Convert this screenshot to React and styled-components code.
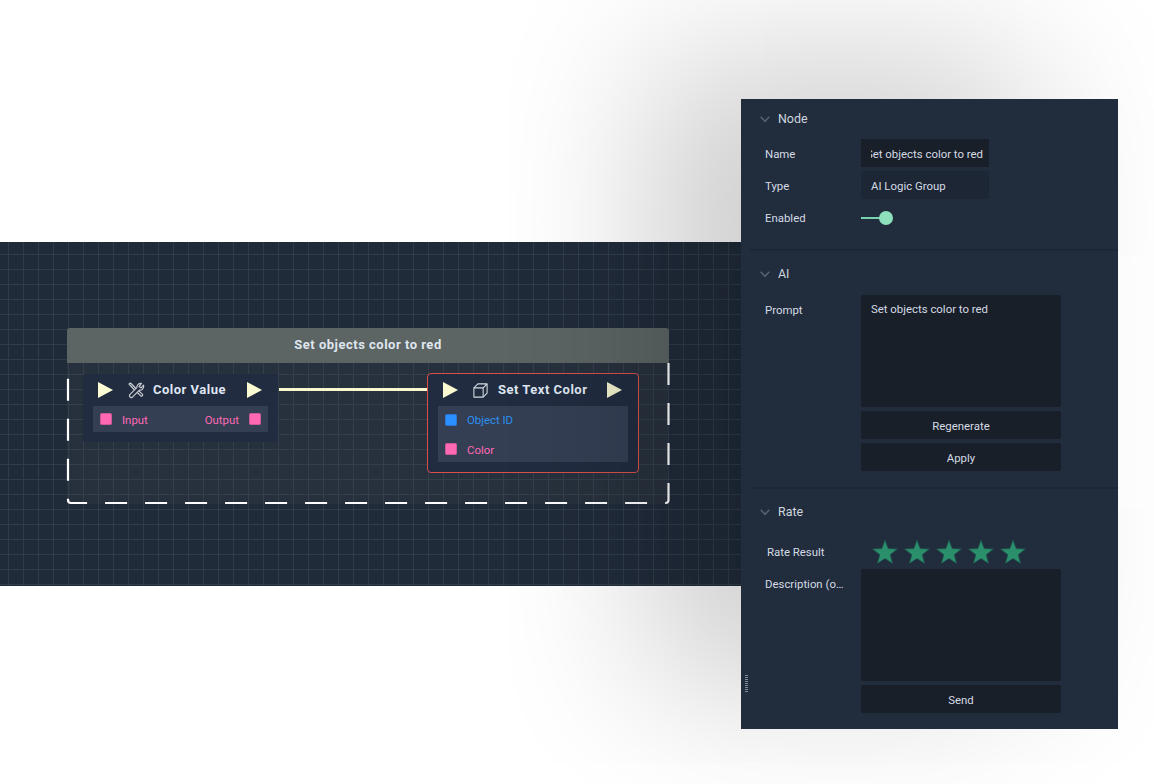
import React from "react";
import styled, { createGlobalStyle } from "styled-components";

const Global = createGlobalStyle`
  html, body { margin: 0; padding: 0; background: #fff; }
  body { font-family: Roboto, "Liberation Sans", sans-serif; overflow: hidden; }
`;

const Page = styled.div`
  position: relative;
  width: 1154px;
  height: 784px;
  padding-top: 242px;
  box-sizing: border-box;
  overflow: hidden;
`;

const Canvas = styled.div`
  position: relative;
  width: 760px;
  height: 344px;
  background-color: #202b3a;
  background-image:
    linear-gradient(to right, #303c4a 1px, transparent 1px),
    linear-gradient(to bottom, #303c4a 1px, transparent 1px);
  background-size: 15px 15px;
  background-position: 8px 12px;
`;

const Group = styled.div`
  position: absolute;
  left: 67px;
  top: 86px;
  width: 602px;
  height: 176px;
`;

const GroupHeader = styled.div`
  height: 35px;
  padding-bottom: 2px;
  box-sizing: border-box;
  background: #5c6464;
  border-radius: 3px 3px 0 0;
  color: #dfe6ee;
  font-size: 13px;
  font-weight: 700;
  letter-spacing: 0.5px;
  display: flex;
  align-items: center;
  justify-content: center;
`;

const GroupBody = styled.div`
  position: relative;
  height: 141px;
  background: rgba(70, 75, 80, 0.18);
`;

const GroupOutline = styled.svg`
  position: absolute;
  left: 0;
  top: 0;
  overflow: visible;
`;

const Wire = styled.div`
  position: absolute;
  left: 279px;
  top: 145.5px;
  width: 149px;
  height: 3px;
  background: #fbf8cf;
`;

const Node = styled.div`
  position: absolute;
  left: ${(p) => p.$x}px;
  top: ${(p) => p.$y}px;
  width: ${(p) => p.$w}px;
  height: ${(p) => p.$h}px;
  box-sizing: border-box;
  background: #212c40;
  border: ${(p) => (p.$selected ? "1px solid #d9504a" : "none")};
  border-radius: ${(p) => (p.$selected ? "4px" : "2px")};
  padding: 0 10px;
`;

const NodeHead = styled.div`
  height: 32px;
  display: flex;
  align-items: center;
  padding: 0 ${(p) => p.$pad}px 0 5px;
`;

const Flow = styled.svg`
  flex: none;
  width: 15px;
  height: 16px;
  display: block;
`;

const NodeIcon = styled.svg`
  flex: none;
  width: ${(p) => p.$size}px;
  height: ${(p) => p.$size}px;
  margin-left: ${(p) => p.$left}px;
`;

const NodeTitle = styled.div`
  flex: 1;
  margin-left: ${(p) => p.$left}px;
  padding-bottom: 2px;
  color: #dfe6f2;
  font-size: 13px;
  font-weight: 700;
  letter-spacing: 0.5px;
  white-space: nowrap;
`;

const Pins = styled.div`
  background: #343f54;
  padding: ${(p) => p.$pad};
  display: flex;
  flex-direction: column;
  gap: ${(p) => p.$gap}px;
`;

const PinRow = styled.div`
  height: 12px;
  display: flex;
  align-items: center;
  justify-content: space-between;
  font-size: 11.4px;
  color: ${(p) => p.$color};
`;

const PinSide = styled.div`
  display: flex;
  align-items: center;
  gap: 10px;
`;

const PinText = styled.span`
  position: relative;
  top: ${(p) => (p.$raised ? "-0.5px" : "0.5px")};
`;

const Pin = styled.span`
  width: 12px;
  height: 12px;
  border-radius: 2px;
  background: ${(p) => p.$color};
  box-shadow: inset 0 0 0 1px rgba(60, 40, 80, 0.25);
`;

const Panel = styled.aside`
  position: absolute;
  left: 741px;
  top: 99px;
  width: 377px;
  height: 630px;
  background: #212c3d;
  box-shadow: -90px -40px 160px rgba(0, 0, 0, 0.2);
  color: #d4dbe4;
  font-size: 11.4px;
`;

const Section = styled.section`
  padding: ${(p) => p.$top}px 0 ${(p) => p.$bottom}px;
`;

const SectionHead = styled.div`
  height: 38px;
  display: flex;
  align-items: center;
  padding-left: 19px;
  gap: 8px;
  font-size: 12.4px;
  color: #cfd6df;
  margin-bottom: ${(p) => p.$after}px;
`;

const Chevron = styled.svg`
  width: 10px;
  height: 7px;
  margin-top: 2px;
`;

const Divider = styled.div`
  height: 2px;
  margin-left: 9px;
  background: #1c2634;
`;

const Rows = styled.div`
  display: flex;
  flex-direction: column;
  gap: 4px;
`;

const Row = styled.div`
  display: grid;
  grid-template-columns: 96px 200px;
  padding-left: 24px;
`;

const Label = styled.div`
  height: 28px;
  max-width: 79px;
  line-height: 30px;
  padding-left: ${(p) => p.$indent || 0}px;
  white-space: nowrap;
  overflow: hidden;
  text-overflow: ellipsis;
`;

const Field = styled.div`
  width: 128px;
  height: 28px;
  box-sizing: border-box;
  padding: 1px 6px 0 10px;
  background: ${(p) => (p.$readonly ? "#1d2634" : "#191f29")};
  color: #d4dbe4;
  display: flex;
  align-items: center;
  justify-content: ${(p) => (p.$readonly ? "flex-start" : "flex-end")};
  overflow: hidden;
`;

const FieldClip = styled.div`
  overflow: hidden;
  display: flex;
  justify-content: flex-end;
  white-space: nowrap;
`;

const Toggle = styled.div`
  height: 28px;
  padding-top: 2px;
  box-sizing: border-box;
  display: flex;
  align-items: center;
`;

const ToggleTrack = styled.div`
  width: 20px;
  height: 2px;
  background: #77d2ad;
`;

const ToggleThumb = styled.div`
  width: 14px;
  height: 14px;
  border-radius: 50%;
  margin-left: -2px;
  background: #8ee0bc;
`;

const TextArea = styled.div`
  height: 112px;
  box-sizing: border-box;
  padding: 7px 10px;
  border-radius: 2px;
  background: #191f29;
  color: #d4dbe4;
  line-height: 14px;
`;

const Button = styled.div`
  height: 28px;
  padding-top: 1px;
  box-sizing: border-box;
  border-radius: 2px;
  background: #191f29;
  color: #d4dbe4;
  display: flex;
  align-items: center;
  justify-content: center;
`;

const Stars = styled.div`
  height: 28px;
  display: flex;
  align-items: center;
  padding: 2px 0 0 10px;
  box-sizing: border-box;
  gap: 4px;
`;

const Star = styled.svg`
  width: 28px;
  height: 28px;
  flex: none;
`;

const Grip = styled.div`
  position: absolute;
  left: 4px;
  top: 576px;
  width: 3px;
  height: 17px;
  background-image: linear-gradient(to bottom, #7f8a99 1px, transparent 1px);
  background-size: 3px 2px;
`;

const Triangle = ({ color }) => (
  <Flow viewBox="0 0 15 16">
    <path d="M0 0 L15 8 L0 16 Z" fill={color} />
  </Flow>
);

const Tools = () => (
  <NodeIcon $size={17} $left={15} viewBox="0 0 17 17" fill="none" stroke="#c8ccd0" strokeWidth="1.2" strokeLinejoin="round" strokeLinecap="round">
    <path d="M1 2 L2.5 1 L9 7.5 L7.5 9 Z" />
    <path d="M7.8 9 L13 14.2 a1.4 1.4 0 0 0 1.6 -1.8 L9.2 7.4" />
    <path d="M15.6 3.2 L13 5.8 L11 4.6 L13.4 1.4 A4 4 0 0 0 8.8 5.6 L1.6 12.8 A2 2 0 0 0 4.2 15.4 L11.4 8.2 A4 4 0 0 0 15.6 3.2 Z" fill="#212c40" />
  </NodeIcon>
);

const Cube = () => (
  <NodeIcon $size={15} $left={15} viewBox="0 0 17 17" fill="none" stroke="#d4dae2" strokeWidth="1.2" strokeLinejoin="round">
    <path d="M1 5.5 H11.5 V16 H1 Z" />
    <path d="M1 5.5 L5.5 1 H16 V11.5 L11.5 16 M11.5 5.5 L16 1" />
  </NodeIcon>
);

const ChevronIcon = () => (
  <Chevron viewBox="0 0 10 7" fill="none" stroke="#566170" strokeWidth="1.6">
    <path d="M0.7 0.8 L5 5.4 L9.3 0.8" />
  </Chevron>
);

const StarIcon = () => (
  <Star viewBox="0 0 28 28">
    <path
      d="M14 2 L17.2 10.6 L26.5 11 L19.2 16.8 L21.7 25.6 L14 20.6 L6.3 25.6 L8.8 16.8 L1.5 11 L10.8 10.6 Z"
      fill="#2b8f6b"
      stroke="#1d4f4c"
      strokeWidth="0.7"
    />
  </Star>
);

const Header = ({ children, after }) => (
  <SectionHead $after={after}>
    <ChevronIcon />
    {children}
  </SectionHead>
);

export default function App() {
  return (
    <Page>
      <Global />
      <Canvas>
        <Group>
          <GroupHeader>Set objects color to red</GroupHeader>
          <GroupBody>
            <GroupOutline width="602" height="141" viewBox="0 0 602 141" fill="none">
              <path
                d="M601.5 0 V137 a3 3 0 0 1 -3 3 H4 a3 3 0 0 1 -3 -3 V0"
                stroke="#ffffff"
                strokeWidth="2.2"
                strokeDasharray="22 18"
              />
            </GroupOutline>
          </GroupBody>
        </Group>
        <Wire />
        <Node $x={83} $y={132} $w={195} $h={68}>
          <NodeHead $pad={6}>
            <Triangle color="#fdfbd3" />
            <Tools />
            <NodeTitle $left={8}>Color Value</NodeTitle>
            <Triangle color="#fdfbd3" />
          </NodeHead>
          <Pins $pad="7px 7px" $gap={0}>
            <PinRow $color="#ff69b4">
              <PinSide>
                <Pin $color="#ff69b4" />
                <PinText>Input</PinText>
              </PinSide>
              <PinSide>
                <PinText>Output</PinText>
                <Pin $color="#ff69b4" />
              </PinSide>
            </PinRow>
          </Pins>
        </Node>
        <Node $x={427} $y={131} $w={212} $h={100} $selected>
          <NodeHead $pad={6}>
            <Triangle color="#fbf9d2" />
            <Cube />
            <NodeTitle $left={10}>Set Text Color</NodeTitle>
            <Triangle color="#f0efcb" />
          </NodeHead>
          <Pins $pad="8px 7px 7px" $gap={17}>
            <PinRow $color="#2c8ff0">
              <PinSide>
                <Pin $color="#2a90ff" />
                <PinText $raised>Object ID</PinText>
              </PinSide>
            </PinRow>
            <PinRow $color="#ff69b4">
              <PinSide>
                <Pin $color="#ff69b4" />
                <PinText>Color</PinText>
              </PinSide>
            </PinRow>
          </Pins>
        </Node>
      </Canvas>

      <Panel>
        <Section $top={0} $bottom={18}>
          <Header after={2}>Node</Header>
          <Rows>
            <Row>
              <Label>Name</Label>
              <Field>
                <FieldClip>Set objects color to red</FieldClip>
              </Field>
            </Row>
            <Row>
              <Label>Type</Label>
              <Field $readonly>AI Logic Group</Field>
            </Row>
            <Row>
              <Label>Enabled</Label>
              <Toggle>
                <ToggleTrack />
                <ToggleThumb />
              </Toggle>
            </Row>
          </Rows>
        </Section>
        <Divider />
        <Section $top={3} $bottom={16}>
          <Header after={3}>AI</Header>
          <Rows>
            <Row>
              <Label>Prompt</Label>
              <TextArea>Set objects color to red</TextArea>
            </Row>
            <Row>
              <span />
              <Button>Regenerate</Button>
            </Row>
            <Row>
              <span />
              <Button>Apply</Button>
            </Row>
          </Rows>
        </Section>
        <Divider />
        <Section $top={3} $bottom={16}>
          <Header after={7}>Rate</Header>
          <Rows>
            <Row>
              <Label $indent={2}>Rate Result</Label>
              <Stars>
                <StarIcon />
                <StarIcon />
                <StarIcon />
                <StarIcon />
                <StarIcon />
              </Stars>
            </Row>
            <Row>
              <Label>Description (optional)</Label>
              <TextArea />
            </Row>
            <Row>
              <span />
              <Button>Send</Button>
            </Row>
          </Rows>
        </Section>
        <Grip />
      </Panel>
    </Page>
  );
}
